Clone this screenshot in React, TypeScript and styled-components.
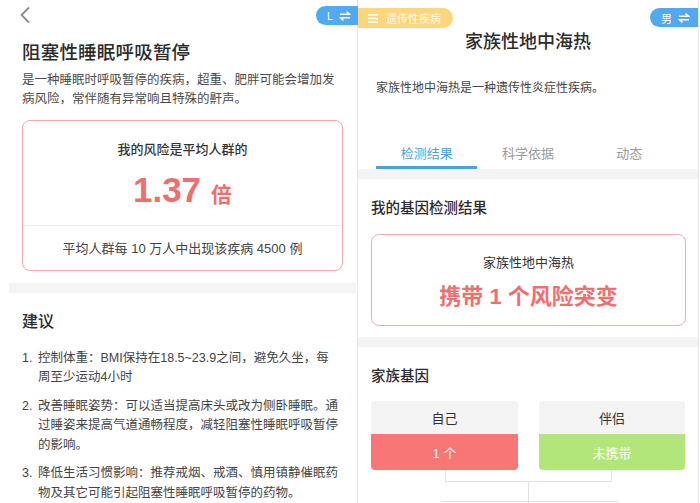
import React from 'react'
import styled, { createGlobalStyle } from 'styled-components'

const Global = createGlobalStyle`
  html, body {
    margin: 0;
    padding: 0;
    background: #ffffff;
  }
  body {
    font-family: "Liberation Sans", "Noto Sans CJK SC", sans-serif;
    color: #333;
  }
`

const Page = styled.div`
  display: flex;
  width: 700px;
  height: 503px;
  overflow: hidden;
  background: #fff;
`

/* ---------- left screen ---------- */

const Left = styled.div`
  position: relative;
  width: 357px;
  flex-shrink: 0;
  display: flex;
  flex-direction: column;
`

const TopBar = styled.div`
  height: 32px;
  display: flex;
  align-items: center;
  padding-left: 19px;
`

const Pill = styled.div<{ $bg: string; $side: 'left' | 'right' }>`
  position: absolute;
  display: flex;
  align-items: center;
  gap: 6px;
  height: 19px;
  padding: 0 8px;
  background: ${(p) => p.$bg};
  color: #fff;
  font-size: 11px;
  border-radius: ${(p) => (p.$side === 'left' ? '10px 0 0 10px' : '0 10px 10px 0')};
  z-index: 2;
`

const LangPill = styled(Pill)`
  top: 6px;
  right: -1px;
  padding: 0 7px 0 11px;
`

const Intro = styled.div`
  padding: 0 14px 0 22px;
`

const Title = styled.h1`
  margin: 10px 0 0;
  font-size: 18.5px;
  line-height: 24px;
  font-weight: 500;
  color: #2b2b2b;
  letter-spacing: 0.2px;
`

const Desc = styled.p`
  margin: 6px 0 0;
  font-size: 12.5px;
  line-height: 19.5px;
  color: #4a4a4a;
`

const RiskCard = styled.div`
  margin: 10px 14px 0 22px;
  border: 1px solid #f1a9a9;
  border-radius: 8px;
  display: flex;
  flex-direction: column;
`

const RiskTop = styled.div`
  display: flex;
  flex-direction: column;
  align-items: center;
  padding: 20px 0 15px;
  border-bottom: 1px solid #ececec;
`

const RiskLabel = styled.div`
  font-size: 13px;
  line-height: 18px;
  font-weight: 500;
  color: #333;
`

const RiskValue = styled.div`
  margin-top: 11px;
  display: flex;
  align-items: baseline;
  gap: 10px;
  height: 40px;
  color: #f26e6e;
  font-weight: 700;
`

const Big = styled.span`
  font-size: 35px;
  line-height: 40px;
`

const Unit = styled.span`
  font-size: 21px;
  font-family: "Noto Sans CJK SC", sans-serif;
`

const RiskFoot = styled.div`
  height: 44px;
  display: flex;
  align-items: center;
  justify-content: center;
  font-size: 13px;
  color: #444;
`

const Band = styled.div<{ $inset?: boolean }>`
  height: 10px;
  flex-shrink: 0;
  background: #f3f4f6;
  margin: ${(p) => (p.$inset ? '12px 1px 0 9px' : '0')};
`

const Advice = styled.div`
  padding: 18px 17.5px 0 22px;
`

const SectionTitle = styled.h2`
  margin: 0;
  font-size: 16px;
  line-height: 22px;
  font-weight: 500;
  color: #2b2b2b;
`

const List = styled.ol`
  margin: 16px 0 0;
  padding: 0;
  list-style: none;
  display: flex;
  flex-direction: column;
  gap: 9px;
`

const Item = styled.li`
  display: flex;
  font-size: 12.5px;
  line-height: 19.5px;
  color: #444;
`

const Num = styled.span`
  width: 16px;
  flex-shrink: 0;
`

/* ---------- right screen ---------- */

const Right = styled.div`
  position: relative;
  width: 340px;
  flex-shrink: 0;
  border-left: 1px solid #e4e4e4;
  border-right: 1px solid #e4e4e4;
  display: flex;
  flex-direction: column;
`

const TypePill = styled(Pill)`
  top: 8px;
  left: 0;
  height: 20px;
  padding: 0 12px 0 10px;
  gap: 8px;
  font-size: 11px;
  color: #fffaf0;
`

const SexPill = styled(Pill)`
  top: 8px;
  right: 0;
  padding: 0 8px 0 11px;
`

const DiseaseTitle = styled.h1`
  margin: 30px 0 0;
  text-align: center;
  font-size: 18px;
  line-height: 24px;
  font-weight: 500;
  color: #2b2b2b;
`

const DiseaseDesc = styled.p`
  margin: 25px 0 0;
  padding-left: 18px;
  font-size: 12px;
  line-height: 18px;
  color: #444;
`

const Tabs = styled.div`
  margin-top: 38px;
  padding: 0 18px;
  display: grid;
  grid-template-columns: repeat(3, 1fr);
`

const Tab = styled.div<{ $active?: boolean }>`
  height: 34px;
  display: flex;
  align-items: center;
  justify-content: center;
  font-size: 13px;
  color: ${(p) => (p.$active ? '#4aa3df' : '#9a9a9a')};
  box-shadow: ${(p) => (p.$active ? 'inset 0 -3px 0 #4aa3df' : 'none')};
`

const Section = styled.div<{ $pb?: number }>`
  padding: 19px 12px ${(p) => p.$pb ?? 0}px 13px;
`

const SubTitle = styled.h3`
  margin: 0;
  font-size: 14.5px;
  line-height: 20px;
  font-weight: 500;
  color: #2b2b2b;
`

const ResultCard = styled.div`
  margin-top: 16px;
  border: 1px solid #f1a9a9;
  border-radius: 8px;
  padding: 19px 0 14px;
  display: flex;
  flex-direction: column;
  align-items: center;
`

const ResultName = styled.div`
  font-size: 13px;
  line-height: 18px;
  color: #333;
`

const ResultValue = styled.div`
  margin-top: 11px;
  font-size: 22px;
  line-height: 28px;
  font-weight: 700;
  color: #f26e6e;
`

const Members = styled.div`
  margin-top: 15px;
  display: grid;
  grid-template-columns: 147px 146px;
  column-gap: 21px;
`

const Member = styled.div`
  border-radius: 4px;
  overflow: hidden;
  display: flex;
  flex-direction: column;
`

const MemberName = styled.div`
  height: 33px;
  display: flex;
  align-items: center;
  justify-content: center;
  background: #f4f4f5;
  font-size: 13px;
  color: #333;
`

const MemberState = styled.div<{ $bg: string }>`
  height: 36px;
  display: flex;
  align-items: center;
  justify-content: center;
  background: ${(p) => p.$bg};
  font-size: 13px;
  color: #fff;
`

const Tree = styled.svg`
  display: block;
  margin-left: 58px;
`

const SwapIcon = () => (
  <svg width="12" height="10" viewBox="0 0 12 10" fill="none" stroke="#fff" strokeWidth="1.6">
    <path d="M1 3.2h9.5L7.6 0.6" />
    <path d="M11 6.8H1.5l2.9 2.6" />
  </svg>
)

const MenuIcon = () => (
  <svg width="10" height="9" viewBox="0 0 10 9" fill="#fff">
    <rect x="0" y="0" width="10" height="1.6" />
    <rect x="0" y="3.7" width="10" height="1.6" />
    <rect x="0" y="7.4" width="10" height="1.6" />
  </svg>
)

const BackIcon = () => (
  <svg width="12" height="18" viewBox="0 0 12 18" fill="none" stroke="#8a8a8a" strokeWidth="1.8">
    <path d="M10 1.5L2.5 9l7.5 7.5" />
  </svg>
)

const advice = [
  '控制体重：BMI保持在18.5~23.9之间，避免久坐，每周至少运动4小时',
  '改善睡眠姿势：可以适当提高床头或改为侧卧睡眠。通过睡姿来提高气道通畅程度，减轻阻塞性睡眠呼吸暂停的影响。',
  '降低生活习惯影响：推荐戒烟、戒酒、慎用镇静催眠药物及其它可能引起阻塞性睡眠呼吸暂停的药物。',
]

export default function App() {
  return (
    <>
      <Global />
      <Page>
        <Left>
          <TopBar>
            <BackIcon />
          </TopBar>
          <LangPill $bg="#52a9ef" $side="left">
            <span>L</span>
            <SwapIcon />
          </LangPill>
          <Intro>
            <Title>阻塞性睡眠呼吸暂停</Title>
            <Desc>是一种睡眠时呼吸暂停的疾病，超重、肥胖可能会增加发病风险，常伴随有异常响且特殊的鼾声。</Desc>
          </Intro>
          <RiskCard>
            <RiskTop>
              <RiskLabel>我的风险是平均人群的</RiskLabel>
              <RiskValue>
                <Big>1.37</Big>
                <Unit>倍</Unit>
              </RiskValue>
            </RiskTop>
            <RiskFoot>平均人群每 10 万人中出现该疾病 4500 例</RiskFoot>
          </RiskCard>
          <Band $inset />
          <Advice>
            <SectionTitle>建议</SectionTitle>
            <List>
              {advice.map((text, i) => (
                <Item key={i}>
                  <Num>{i + 1}.</Num>
                  <span>{text}</span>
                </Item>
              ))}
            </List>
          </Advice>
        </Left>

        <Right>
          <TypePill $bg="#fcd67c" $side="right">
            <MenuIcon />
            <span>遗传性疾病</span>
          </TypePill>
          <SexPill $bg="#52a9ef" $side="left">
            <span>男</span>
            <SwapIcon />
          </SexPill>
          <DiseaseTitle>家族性地中海热</DiseaseTitle>
          <DiseaseDesc>家族性地中海热是一种遗传性炎症性疾病。</DiseaseDesc>
          <Tabs>
            <Tab $active>检测结果</Tab>
            <Tab>科学依据</Tab>
            <Tab>动态</Tab>
          </Tabs>
          <Band />
          <Section $pb={11}>
            <SubTitle>我的基因检测结果</SubTitle>
            <ResultCard>
              <ResultName>家族性地中海热</ResultName>
              <ResultValue>携带 1 个风险突变</ResultValue>
            </ResultCard>
          </Section>
          <Band />
          <Section>
            <SubTitle>家族基因</SubTitle>
            <Members>
              <Member>
                <MemberName>自己</MemberName>
                <MemberState $bg="#f87676">1 个</MemberState>
              </Member>
              <Member>
                <MemberName>伴侣</MemberName>
                <MemberState $bg="#b3e67a">未携带</MemberState>
              </Member>
            </Members>
            <Tree width="200" height="40" viewBox="0 0 200 40" fill="none" stroke="#e2e2e2" strokeWidth="1">
              <path d="M16.5 0v11.5h166V0" />
              <path d="M99.5 11.5V40" />
              <path d="M13 31.5h176" />
            </Tree>
          </Section>
        </Right>
      </Page>
    </>
  )
}
